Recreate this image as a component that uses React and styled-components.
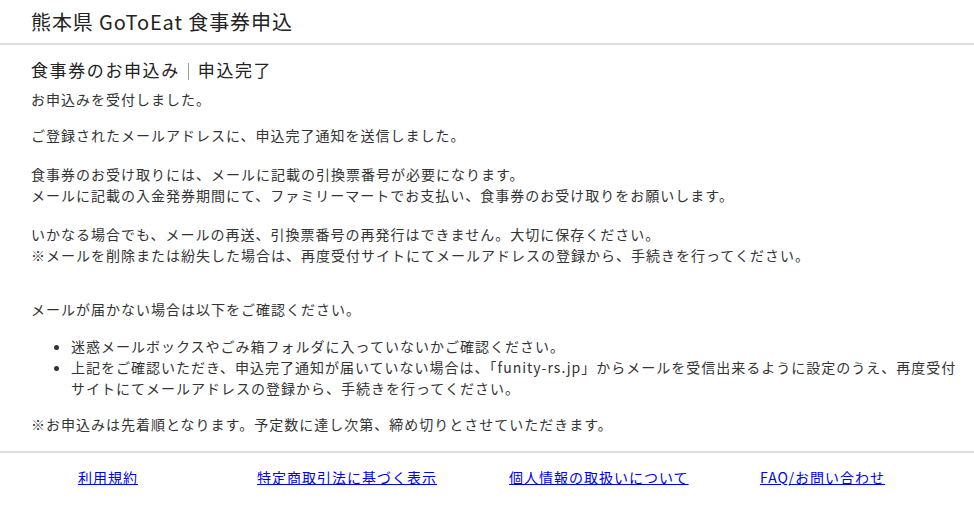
import styled, { createGlobalStyle } from "styled-components";

const GlobalStyle = createGlobalStyle`
  body {
    margin: 0;
    background: #fff;
    color: #333;
    font-family: "Noto Sans CJK JP", "Noto Sans", sans-serif;
  }
`;

const SiteHeader = styled.header`
  height: 43px;
  padding: 0 31px;
  border-bottom: 2px solid #e0e0e0;
  display: flex;
  align-items: center;
`;

const SiteTitle = styled.h1`
  margin: 0;
  font-size: 20px;
  font-weight: 400;
  letter-spacing: 0.9px;
  color: #222;
`;

const Main = styled.main`
  padding: 12px 16px 0 31px;
  font-size: 14px;
  line-height: 21px;
  letter-spacing: 1px;
`;

const PageTitle = styled.h2`
  margin: 0 0 6px;
  font-size: 17px;
  line-height: 26px;
  font-weight: 400;
  letter-spacing: 1.6px;
  color: #222;
`;

const Divider = styled.span`
  display: inline-block;
  width: 1px;
  height: 17px;
  margin: 0 9px 0 8px;
  background: #999;
  vertical-align: -3px;
`;

const Para = styled.p`
  margin: 0 0 ${(p) => p.$gap ?? 18}px;
`;

const List = styled.ul`
  margin: 0 0 15px;
  padding-left: 40px;
  list-style: disc;
`;

const Item = styled.li``;

const SiteFooter = styled.footer`
  margin-top: 16px;
  border-top: 2px solid #e0e0e0;
  padding: 14px 0 20px 78px;
  display: grid;
  grid-template-columns: 179px 252px 251px auto;
  font-size: 14px;
  line-height: 21px;
  letter-spacing: 1px;
`;

const FooterLink = styled.a`
  color: #0000ee;
  text-decoration: underline;
  justify-self: start;
`;

export default function App() {
  return (
    <>
      <GlobalStyle />
      <SiteHeader>
        <SiteTitle>熊本県 GoToEat 食事券申込</SiteTitle>
      </SiteHeader>
      <Main>
        <PageTitle>
          食事券のお申込み
          <Divider />
          申込完了
        </PageTitle>
        <Para $gap={15}>お申込みを受付しました。</Para>
        <Para>ご登録されたメールアドレスに、申込完了通知を送信しました。</Para>
        <Para>
          食事券のお受け取りには、メールに記載の引換票番号が必要になります。
          <br />
          メールに記載の入金発券期間にて、ファミリーマートでお支払い、食事券のお受け取りをお願いします。
        </Para>
        <Para $gap={33}>
          いかなる場合でも、メールの再送、引換票番号の再発行はできません。大切に保存ください。
          <br />
          ※メールを削除または紛失した場合は、再度受付サイトにてメールアドレスの登録から、手続きを行ってください。
        </Para>
        <Para $gap={16}>メールが届かない場合は以下をご確認ください。</Para>
        <List>
          <Item>迷惑メールボックスやごみ箱フォルダに入っていないかご確認ください。</Item>
          <Item>
            上記をご確認いただき、申込完了通知が届いていない場合は、「funity-rs.jp」からメールを受信出来るように設定のうえ、再度受付サイトにてメールアドレスの登録から、手続きを行ってください。
          </Item>
        </List>
        <Para $gap={0}>※お申込みは先着順となります。予定数に達し次第、締め切りとさせていただきます。</Para>
      </Main>
      <SiteFooter>
        <FooterLink href="#">利用規約</FooterLink>
        <FooterLink href="#">特定商取引法に基づく表示</FooterLink>
        <FooterLink href="#">個人情報の取扱いについて</FooterLink>
        <FooterLink href="#">FAQ/お問い合わせ</FooterLink>
      </SiteFooter>
    </>
  );
}
